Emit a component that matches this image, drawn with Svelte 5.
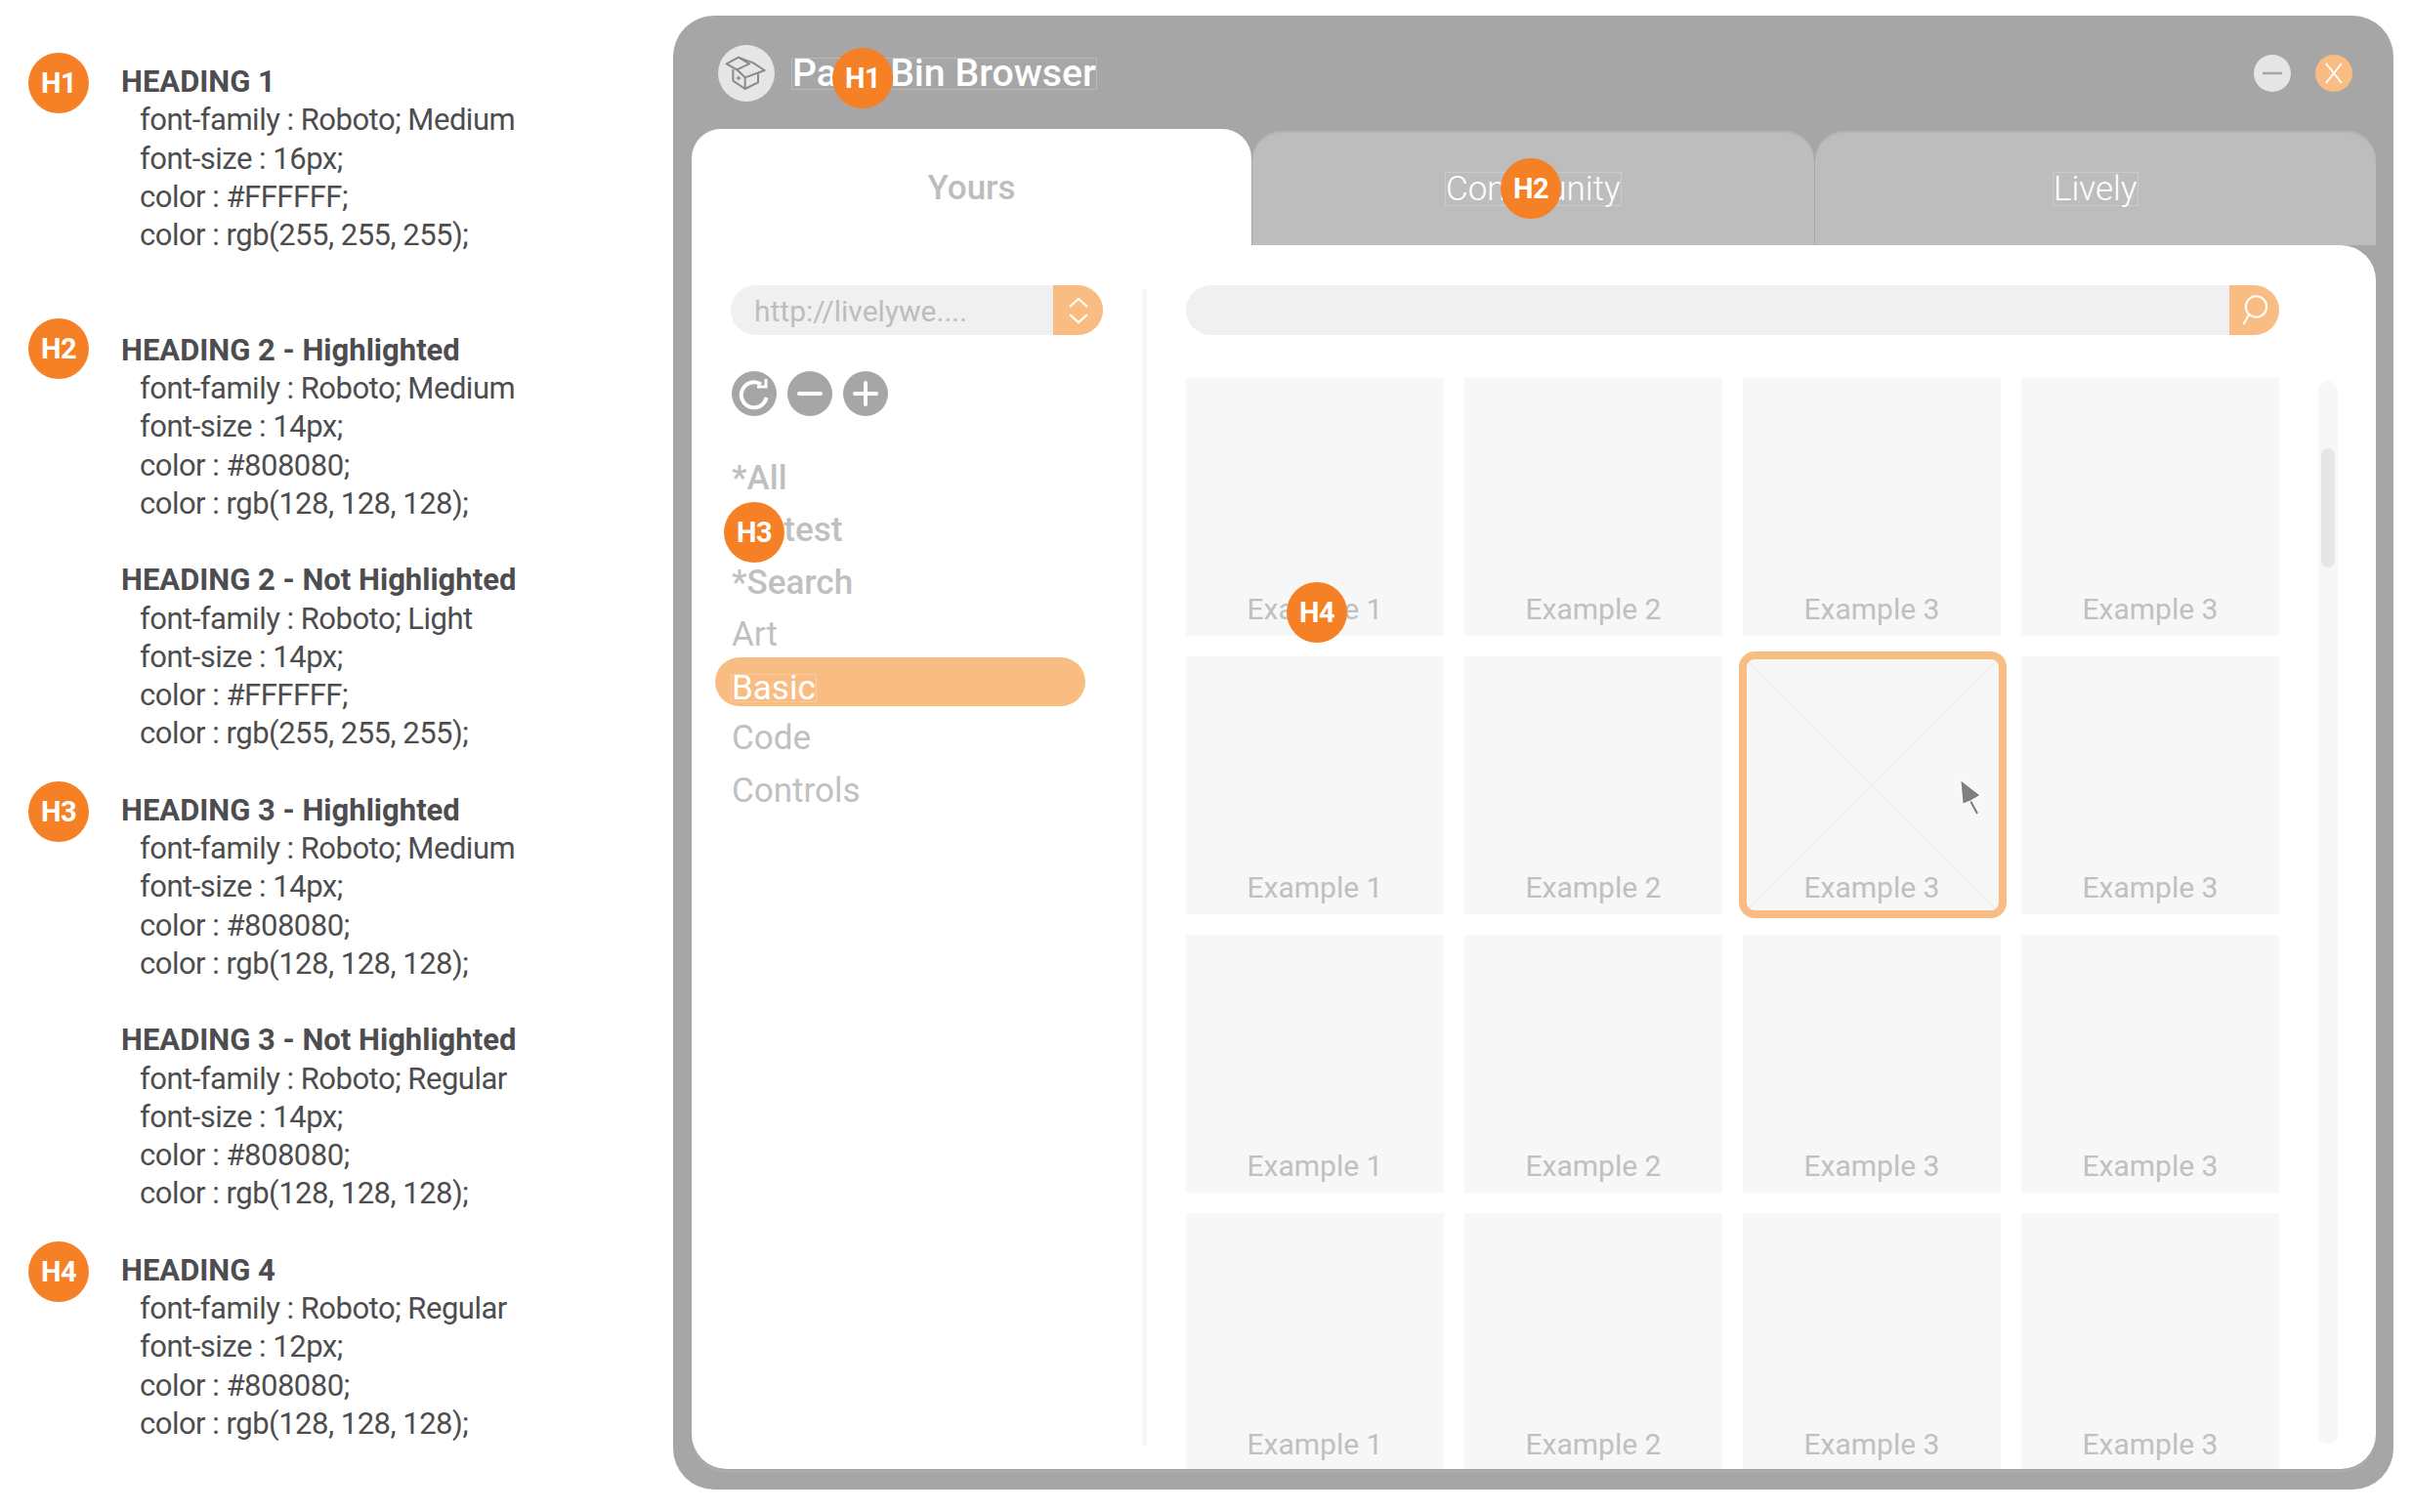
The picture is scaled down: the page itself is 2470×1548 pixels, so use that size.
<script lang="ts">
	const legend = [
		{
			badge: 'H1',
			title: 'HEADING 1',
			lines: ['font-family : Roboto; Medium', 'font-size : 16px;', 'color : #FFFFFF;', 'color : rgb(255, 255, 255);'],
			gap: 'wide'
		},
		{
			badge: 'H2',
			title: 'HEADING 2 - Highlighted',
			lines: ['font-family : Roboto; Medium', 'font-size : 14px;', 'color : #808080;', 'color : rgb(128, 128, 128);']
		},
		{
			title: 'HEADING 2 - Not Highlighted',
			lines: ['font-family : Roboto; Light', 'font-size : 14px;', 'color : #FFFFFF;', 'color : rgb(255, 255, 255);']
		},
		{
			badge: 'H3',
			title: 'HEADING 3 - Highlighted',
			lines: ['font-family : Roboto; Medium', 'font-size : 14px;', 'color : #808080;', 'color : rgb(128, 128, 128);']
		},
		{
			title: 'HEADING 3 - Not Highlighted',
			lines: ['font-family : Roboto; Regular', 'font-size : 14px;', 'color : #808080;', 'color : rgb(128, 128, 128);']
		},
		{
			badge: 'H4',
			title: 'HEADING 4',
			lines: ['font-family : Roboto; Regular', 'font-size : 12px;', 'color : #808080;', 'color : rgb(128, 128, 128);']
		}
	];

	const categories = [
		{ name: '*All', pinned: true },
		{ name: '*Latest', pinned: true },
		{ name: '*Search', pinned: true },
		{ name: 'Art' },
		{ name: 'Basic', active: true },
		{ name: 'Code' },
		{ name: 'Controls' }
	];

	const rowLabels = ['Example 1', 'Example 2', 'Example 3', 'Example 3'];
	const rows = [0, 1, 2, 3];
</script>

<div class="page">
	<aside class="legend">
		{#each legend as item}
			<section class="spec" class:wide={item.gap === 'wide'}>
				<div class="spec-badge {item.badge ?? ''}">
					{#if item.badge}<span class="badge">{item.badge}</span>{/if}
				</div>
				<div class="spec-text">
					<h4>{item.title}</h4>
					{#each item.lines as line}
						<p>{line}</p>
					{/each}
				</div>
			</section>
		{/each}
	</aside>

	<div class="window">
		<header class="titlebar">
			<span class="logo">
				<svg viewBox="32 30 174 174" width="58" height="58" fill="none" stroke="#8a8a8a" stroke-width="6" stroke-linejoin="round">
					<path d="M58 88 L95 68 L128 88 L90 106 Z" />
					<path d="M100 70 L140 85 L175 108 L115 130 L90 106" />
					<path d="M78 105 V140 L115 165 L155 145 V118" />
					<path d="M115 130 V165" />
					<path d="M88 132 H102 M95 125 V139" stroke-width="4" />
				</svg>
			</span>
			<span class="title boxed">PasteBin Browser</span>
			<span class="badge over-title">H1</span>
			<div class="controls">
				<button class="ctl min" aria-label="Minimize">
					<svg viewBox="0 0 38 38" width="38" height="38"><path d="M9 19 H29" stroke="#a6a6a6" stroke-width="2.5" /></svg>
				</button>
				<button class="ctl close" aria-label="Close">
					<svg viewBox="0 0 38 38" width="38" height="38"><path d="M11 9 L27 29 M27 9 L11 29" stroke="#fff" stroke-width="2" /></svg>
				</button>
			</div>
		</header>

		<nav class="tabs">
			<div class="tab active">Yours</div>
			<div class="tab"><span class="boxed">Community</span><span class="badge over-tab">H2</span></div>
			<div class="tab"><span class="boxed">Lively</span></div>
		</nav>

		<main class="content">
			<div class="sidebar">
				<div class="url">
					<span class="url-text">http://livelywe....</span>
					<span class="url-btn">
						<svg viewBox="0 0 24 32" width="24" height="32" fill="none" stroke="#fff" stroke-width="2.2"><path d="M3 12 L12 4 L21 12 M3 20 L12 28 L21 20" /></svg>
					</span>
				</div>
				<div class="actions">
					<button class="round" aria-label="Refresh">
						<svg viewBox="0 0 46 46" width="46" height="46" fill="none" stroke="#fff" stroke-width="4">
							<path d="M30 13.5 A13 13 0 1 0 35.5 27" />
							<path d="M26 16 H35 V8" stroke-width="3" />
						</svg>
					</button>
					<button class="round" aria-label="Remove">
						<svg viewBox="0 0 46 46" width="46" height="46"><path d="M12 23 H34" stroke="#fff" stroke-width="4" stroke-linecap="round" /></svg>
					</button>
					<button class="round" aria-label="Add">
						<svg viewBox="0 0 46 46" width="46" height="46"><path d="M12 23 H34 M23 12 V34" stroke="#fff" stroke-width="4" stroke-linecap="round" /></svg>
					</button>
				</div>
				<ul class="cats">
					{#each categories as c}
						<li class:pinned={c.pinned} class:active={c.active}>
							<span class:boxed={c.active}>{c.name}</span>
						</li>
					{/each}
				</ul>
				<span class="badge over-cat">H3</span>
			</div>

			<div class="divider"></div>

			<div class="browse">
				<div class="search">
					<span class="search-btn">
						<svg viewBox="0 0 32 36" width="32" height="36" fill="none" stroke="#fff" stroke-width="2"><circle cx="17.5" cy="14" r="10.7" /><path d="M10 22 L4.5 32" /></svg>
					</span>
				</div>
				<div class="grid">
					{#each rows as r}
						{#each rowLabels as label, c}
							<div class="tile" class:selected={r === 1 && c === 2}>
								{#if r === 1 && c === 2}
									<svg class="cross" viewBox="0 0 100 100" preserveAspectRatio="none"><path d="M0 0 L100 100 M100 0 L0 100" stroke="#f0f0f0" stroke-width="2" vector-effect="non-scaling-stroke" /></svg>
								{/if}
								<span class="tile-label">{label}</span>
								{#if r === 1 && c === 2}
									<svg class="cursor" viewBox="0 0 26 42" width="26" height="42">
										<path d="M13 25 L20 38" stroke="#fff" stroke-width="4.5" />
										<path d="M13 25 L20 38" stroke="#808080" stroke-width="2.2" />
										<path d="M2.7 3.3 L23.3 19.3 L13.3 25 L5 28.3 Z" fill="#808080" stroke="#fff" stroke-width="1.2" />
									</svg>
								{/if}
								{#if r === 0 && c === 0}<span class="badge over-tile">H4</span>{/if}
							</div>
						{/each}
					{/each}
				</div>
			</div>

			<div class="scrollbar"><div class="thumb"></div></div>
		</main>
	</div>
</div>

<style>
	:global(body) {
		margin: 0;
		background: #fff;
	}

	.page {
		display: flex;
		width: 2470px;
		height: 1548px;
		overflow: hidden;
		font-family: Roboto, sans-serif;
	}

	/* ── Legend ── */
	.legend {
		width: 689px;
		flex: none;
		box-sizing: border-box;
		padding: 64px 0 0 29px;
		font-family: Roboto, sans-serif;
		color: #4d4d4f;
	}
	.spec {
		display: flex;
		margin-bottom: 39.25px;
	}
	.spec.wide {
		margin-bottom: 78.5px;
	}
	.spec-badge {
		width: 95px;
		flex: none;
		margin-top: -10px;
	}
	.spec-badge.H2 {
		margin-top: -13px;
	}
	.spec-text h4 {
		margin: 0;
		font-size: 31px;
		font-weight: 700;
		line-height: 39.25px;
	}
	.spec-text p {
		margin: 0 0 0 19px;
		font-size: 31px;
		letter-spacing: -0.5px;
		line-height: 39.25px;
	}

	.badge {
		display: flex;
		align-items: center;
		justify-content: center;
		width: 62px;
		height: 62px;
		border-radius: 50%;
		background: #f58025;
		color: #fff;
		font-family: Roboto, sans-serif;
		font-size: 29px;
		font-weight: 700;
		letter-spacing: -0.5px;
	}

	/* ── Window ── */
	.window {
		position: relative;
		width: 1761px;
		height: 1509px;
		margin-top: 16px;
		box-sizing: border-box;
		padding: 0 18px 21px 19px;
		background: #a6a6a6;
		border-radius: 42px;
		display: flex;
		flex-direction: column;
	}
	.titlebar {
		height: 116px;
		flex: none;
		display: flex;
		align-items: flex-start;
		padding: 30px 24px 0 27px;
		box-sizing: border-box;
		position: relative;
	}
	.logo {
		width: 58px;
		height: 58px;
		border-radius: 50%;
		background: #e6e6e6;
		display: flex;
		align-items: center;
		justify-content: center;
	}
	.title {
		margin: 14px 0 0 18px;
		color: #fff;
		font-size: 39.2px;
		font-weight: 500;
		line-height: 31px;
	}
	.boxed {
		outline: 1px solid rgba(255, 255, 255, 0.22);
	}
	.over-title {
		position: absolute;
		left: 144px;
		top: 33px;
	}
	.controls {
		margin-left: auto;
		display: flex;
		gap: 25px;
		margin-top: 10px;
	}
	.ctl {
		width: 38px;
		height: 38px;
		padding: 0;
		border: none;
		border-radius: 50%;
		display: block;
	}
	.ctl svg {
		display: block;
	}
	.ctl.min {
		background: #e6e6e6;
	}
	.ctl.close {
		background: #f9bd84;
	}

	/* ── Tabs ── */
	.tabs {
		height: 119px;
		flex: none;
		display: flex;
		gap: 1px;
		font-size: 35px;
	}
	.tab {
		position: relative;
		flex: 1;
		display: flex;
		align-items: center;
		justify-content: center;
		margin-top: 2px;
		padding-top: 2px;
		background: #bdbdbd;
		color: #fff;
		font-weight: 300;
		border-radius: 30px 30px 0 0;
		box-shadow: inset 0 2px 0 #b2b2b2;
	}
	.tab .boxed {
		line-height: 33px;
	}
	.tab.active {
		flex: none;
		width: 573px;
		margin-top: 0;
		background: #fff;
		color: #bdbdbd;
		font-weight: 500;
		box-shadow: none;
	}
	.over-tab {
		position: absolute;
		left: 254px;
		top: 28px;
	}

	/* ── Content ── */
	.content {
		flex: 1;
		min-height: 0;
		display: flex;
		background: #fff;
		border-radius: 0 36px 36px 36px;
		box-shadow: 0 2px 0 #a6a6a6, 0 3px 0 #b4b4b4;
		position: relative;
	}

	.sidebar {
		position: relative;
		width: 461px;
		flex: none;
		box-sizing: border-box;
		padding: 41px 0 0 40px;
	}
	.url {
		width: 381px;
		height: 51px;
		display: flex;
		align-items: center;
		background: #f0f0f0;
		border-radius: 26px;
		overflow: hidden;
		color: #bdbdbd;
		font-size: 30px;
	}
	.url-text {
		flex: 1;
		padding: 2px 0 0 24px;
	}
	.url-btn {
		width: 51px;
		height: 100%;
		background: #f9bd84;
		display: flex;
		align-items: center;
		justify-content: center;
	}
	.actions {
		display: flex;
		gap: 11px;
		margin: 37px 0 0 1px;
	}
	.round {
		width: 46px;
		height: 46px;
		padding: 0;
		border: none;
		border-radius: 50%;
		background: #a6a6a6;
	}
	.round svg {
		display: block;
	}
	.cats {
		list-style: none;
		margin: 37px 0 0 -16px;
		padding: 0;
		width: 379px;
		font-size: 35px;
		color: #c0c0c0;
	}
	.cats li {
		height: 53.3px;
		line-height: 53.3px;
		padding-left: 17px;
		box-sizing: border-box;
	}
	.cats li.pinned {
		font-weight: 500;
	}
	.cats li.active {
		background: #f9bd84;
		color: #fff;
		border-radius: 25px;
		height: 50px;
		line-height: 49px;
		padding-top: 7px;
		margin: -3px 0 6.3px;
	}
	.cats li.active .boxed {
		display: inline-block;
		line-height: 27px;
	}
	.over-cat {
		position: absolute;
		left: 33px;
		top: 263px;
	}

	.divider {
		width: 5px;
		flex: none;
		margin: 45px 0 24px;
		background: #f7f7f7;
	}

	.browse {
		width: 1119px;
		height: 100%;
		flex: none;
		margin-left: 40px;
		padding-top: 41px;
		box-sizing: border-box;
		overflow: hidden;
	}
	.search {
		height: 51px;
		display: flex;
		justify-content: flex-end;
		background: #f0f0f0;
		border-radius: 26px;
		overflow: hidden;
	}
	.search-btn {
		width: 51px;
		background: #f9bd84;
		display: flex;
		align-items: center;
		justify-content: center;
	}
	.grid {
		display: grid;
		grid-template-columns: repeat(4, 264px);
		grid-auto-rows: 264px;
		gap: 21px;
		margin-top: 44px;
	}
	.tile {
		position: relative;
		background: #f7f7f7;
		display: flex;
		align-items: flex-end;
		justify-content: center;
	}
	.tile-label {
		position: relative;
		font-size: 30px;
		line-height: 36px;
		margin-bottom: 9px;
		color: #c0c0c0;
	}
	.tile.selected::after {
		content: '';
		position: absolute;
		inset: -5px -6px -4px -4px;
		border: 8px solid #f9bd84;
		border-radius: 16px;
		pointer-events: none;
	}
	.cross {
		position: absolute;
		inset: 0;
		width: 100%;
		height: 100%;
	}
	.cursor {
		position: absolute;
		left: 220px;
		top: 123px;
		z-index: 1;
	}
	.over-tile {
		position: absolute;
		left: 103px;
		top: 209px;
	}

	.scrollbar {
		position: absolute;
		left: 1665px;
		top: 139px;
		width: 20px;
		height: 1089px;
		border-radius: 10px;
		background: #f7f7f7;
		box-sizing: border-box;
		padding: 69px 3px 0;
	}
	.thumb {
		height: 122px;
		border-radius: 7px;
		background: #e6e6e6;
	}
</style>
